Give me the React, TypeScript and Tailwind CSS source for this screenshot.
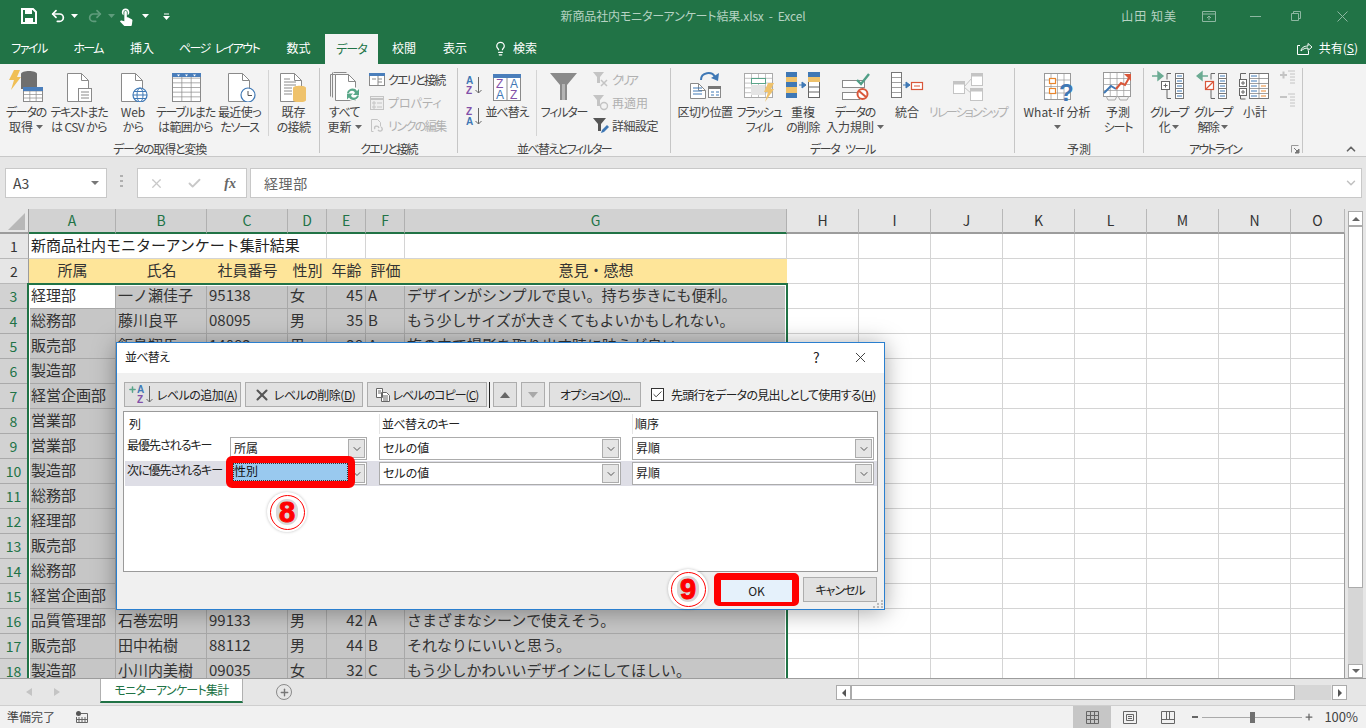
import { Check, ChevronDown, ChevronUp, Lightbulb, Plus, Redo2, Undo2, X } from "lucide-react";
import type { ReactNode } from "react";
import { MdTouchApp } from "react-icons/md";

const BLUE = "#3f78b5";
const ORANGE = "#efc26b";
const LINE = "#8a8a8a";
const DIM = "#c4c4c4";

// sheet data, rows hidden by the dialog only have the first column showing
const rows: string[][] = [
  ["3", "経理部", "一ノ瀬佳子", "95138", "女", "45", "A", "デザインがシンプルで良い。持ち歩きにも便利。"],
  ["4", "総務部", "藤川良平", "08095", "男", "35", "B", "もう少しサイズが大きくてもよいかもしれない。"],
  ["5", "販売部", "飯島翔馬", "14083", "男", "38", "A", "旅の中で撮影を取り出す時に映えが良い。"],
  ["6", "製造部"],
  ["7", "経営企画部"],
  ["8", "営業部"],
  ["9", "営業部"],
  ["10", "製造部"],
  ["11", "総務部"],
  ["12", "経理部"],
  ["13", "販売部"],
  ["14", "総務部"],
  ["15", "経営企画部"],
  ["16", "品質管理部", "石巻宏明", "99133", "男", "42", "A", "さまざまなシーンで使えそう。"],
  ["17", "販売部", "田中祐樹", "88112", "男", "44", "B", "それなりにいいと思う。"],
  ["18", "製造部", "小川内美樹", "09035", "女", "32", "C", "もう少しかわいいデザインにしてほしい。"],
];

const colWidths = ["w-[87px]", "w-[91px]", "w-[81px]", "w-[39px]", "w-[39px]", "w-[39px]", "w-[382px]"];
const restWidths = ["w-[72px]", "w-[72px]", "w-[72px]", "w-[72px]", "w-[72px]", "w-[72px]", "w-[72px]", "w-[54px]"];
const colNames = ["A", "B", "C", "D", "E", "F", "G"];
const restNames = ["H", "I", "J", "K", "L", "M", "N", "O"];

// the kana of the UI font in the picture is narrower than Noto's, even with palt
const kanaTrack = (line: string) => {
  if (/[ァ-ヿ]/.test(line)) return "tracking-[-1.2px]";
  if (/[ぁ-ゖ]/.test(line)) return "tracking-[-0.6px]";
  return "";
};

const Caret = ({ color = "#666" }: { color?: string }) => (
  <svg width="7" height="4" viewBox="0 0 7 4" className="inline-block">
    <path d="M0 0h7L3.5 4z" fill={color} />
  </svg>
);

const Icon = ({ children, size = 32 }: { children: ReactNode; size?: number }) => (
  <svg width={size} height={size} viewBox={`0 0 ${size} ${size}`} className="shrink-0">
    {children}
  </svg>
);

const Doc = ({ x = 1, y = 3, w = 21, h = 28 }: { x?: number; y?: number; w?: number; h?: number }) => (
  <>
    <path d={`M${x + 0.5} ${y + 0.5}h${w - 7}l7 7v${h - 7}h-${w}z`} fill="#fff" stroke={LINE} />
    <path d={`M${x + w - 6.5} ${y + 0.5}v7h7`} fill="none" stroke={LINE} />
  </>
);

const Grid3 = ({ x, y, w, h, cols, rowsN, color = "#8a8a8a", head }: { x: number; y: number; w: number; h: number; cols: number; rowsN: number; color?: string; head?: string }) => {
  const cw = w / cols;
  const rh = h / rowsN;
  return (
    <>
      <rect x={x + 0.5} y={y + 0.5} width={w} height={h} fill="#fff" stroke={color} />
      {Array.from({ length: cols - 1 }).map((_, i) => (
        <path key={i} d={`M${x + 0.5 + cw * (i + 1)} ${y}v${h}`} stroke={color} strokeOpacity="0.7" />
      ))}
      {Array.from({ length: rowsN - 1 }).map((_, i) => (
        <path key={i} d={`M${x} ${y + 0.5 + rh * (i + 1)}h${w}`} stroke={color} strokeOpacity="0.7" />
      ))}
      {head && <rect x={x} y={y} width={w + 1} height={4} fill={head} />}
    </>
  );
};

const IconDataGet = () => (
  <Icon size={34}>
    <path d="M5 1h6L8 8h4L2 21l3-10H0z" fill="#f0bf55" />
    <path d="M12 5c0-4 16-4 16 0v15H12z" fill="#6f6f6f" />
    <Grid3 x={14} y={18} w={19} h={14} cols={3} rowsN={4} head="#4a7ebb" />
  </Icon>
);
const IconText = () => (
  <Icon>
    <Doc x={4} />
    <rect x="15.5" y="18.5" width="13" height="13" fill="#fff" stroke={LINE} />
    <path d="M18 22h8M18 25h8M18 28h8" stroke={LINE} />
  </Icon>
);
const IconWeb = () => (
  <Icon>
    <Doc x={4} />
    <circle cx="23" cy="25" r="7" fill="#fff" stroke={BLUE} strokeWidth="1.2" />
    <ellipse cx="23" cy="25" rx="3" ry="7" fill="none" stroke={BLUE} />
    <path d="M16 25h14M17 21.5h12M17 28.5h12" stroke={BLUE} />
  </Icon>
);
const IconTable = () => (
  <Icon>
    <Grid3 x={2} y={3} w={28} h={28} cols={3} rowsN={6} head="#4a7ebb" />
    <path d="M7 4.5h3l-1.5 2zM15 4.5h3l-1.5 2zM23 4.5h3l-1.5 2z" fill="#fff" />
  </Icon>
);
const IconRecent = () => (
  <Icon>
    <Doc x={4} />
    <circle cx="24" cy="25" r="7" fill="#fff" stroke={BLUE} strokeWidth="1.2" />
    <path d="M24 21v4.5h4" fill="none" stroke="#555" />
  </Icon>
);
const IconExisting = () => (
  <Icon>
    <Doc x={2} />
    <path d="M6 9h6M6 12h12M6 15h12M6 18h8M6 21h8M6 24h8" stroke={LINE} />
    <path d="M15 18c0-3 13-3 13 0v12c0 3-13 3-13 0z" fill={ORANGE} />
  </Icon>
);
const IconRefresh = () => (
  <Icon>
    <path d="M1.5 4.5h13M1.5 4.5v22M4.5 2.5h13M3.5 2.5v25" fill="none" stroke={LINE} />
    <Doc x={6} y={4} w={20} h={26} />
    <circle cx="24" cy="24" r="7" fill="#fff" />
    <path d="M18 23c1-5 8-6 10-2l2-2v6h-6l2-2c-1-3-5-3-6 0zM30 25.5c-1 5-8 6-10 2l-2 2v-6h6l-2 2c1 3 5 3 6 0z" fill="#58a888" />
  </Icon>
);
const IconQuery = () => (
  <Icon size={16}>
    <rect x="0.5" y="1.5" width="15" height="12" fill="#fff" stroke={LINE} />
    <rect x="0" y="1" width="16" height="3" fill="#4a7ebb" />
    <path d="M3 7h4M9 7h4M9 10h4M9 4v10" stroke={LINE} />
  </Icon>
);
const IconProps = () => (
  <Icon size={16}>
    <rect x="1.5" y="1.5" width="13" height="13" fill="#eee" stroke={DIM} />
    <path d="M1 4h14" stroke={DIM} strokeWidth="2" />
    <path d="M4 7h2v2H4zM4 11h2v2H4zM8 8h5M8 12h5" stroke={DIM} fill="none" />
  </Icon>
);
const IconLink = () => (
  <Icon size={16}>
    <path d="M2.5 1.5h6l3 3v4M2.5 1.5v12h2" fill="none" stroke={DIM} />
    <path d="M6 11c-2-3 3-4 4-1M9 12c3 3 6-1 3-3" fill="none" stroke={DIM} strokeWidth="1.4" />
  </Icon>
);
const SortAZ = ({ first, second }: { first: string; second: string }) => (
  <svg width="17" height="19" viewBox="0 0 17 19" className="shrink-0">
    <text x="0" y="8" fontSize="10" fontWeight="bold" fontFamily="Liberation Sans" fill={first === "A" ? BLUE : "#8250a8"}>
      {first}
    </text>
    <text x="0" y="18" fontSize="10" fontWeight="bold" fontFamily="Liberation Sans" fill={second === "A" ? BLUE : "#8250a8"}>
      {second}
    </text>
    <path d="M12.5 1v16M9.5 14l3 3 3-3" fill="none" stroke="#666" />
  </svg>
);
const IconSort = () => (
  <Icon>
    <rect x="2.5" y="6.5" width="27" height="24" fill="#fff" stroke={LINE} />
    <rect x="2" y="4" width="28" height="4" fill="#4a7ebb" />
    <path d="M16 8v23" stroke={LINE} />
    <text x="5" y="18" fontSize="12" fontFamily="Liberation Sans" fill="#8250a8">Z</text>
    <text x="5" y="29" fontSize="12" fontFamily="Liberation Sans" fill={BLUE}>A</text>
    <text x="19" y="18" fontSize="12" fontFamily="Liberation Sans" fill={BLUE}>A</text>
    <text x="19" y="29" fontSize="12" fontFamily="Liberation Sans" fill="#8250a8">Z</text>
  </Icon>
);
const IconFunnel = () => (
  <Icon>
    <path d="M2 3h27L19 15v15h-7V15z" fill="#8a8a8a" />
    <path d="M14 14h3v16h-3z" fill="#b4b4b4" />
  </Icon>
);
const IconClear = () => (
  <Icon size={18}>
    <path d="M1 1h11L8 6v6H5V6z" fill={DIM} />
    <path d="M9 9l6 6M15 9l-6 6" stroke={DIM} strokeWidth="1.5" />
  </Icon>
);
const IconReapply = () => (
  <Icon size={18}>
    <path d="M1 1h11L8 6v6H5V6z" fill={DIM} />
    <circle cx="12" cy="12" r="3.5" fill="none" stroke={DIM} strokeWidth="1.4" />
  </Icon>
);
const IconAdvanced = () => (
  <Icon size={18}>
    <path d="M1 1h13L9 7v7H6V7z" fill="#555" />
    <path d="M9 16l1-3 5-5 2 2-5 5z" fill={BLUE} />
  </Icon>
);
const IconSplit = () => (
  <Icon>
    <Doc x={1} y={13} w={15} h={15} />
    <path d="M4 18h9M4 21h9M4 24h9" stroke={BLUE} />
    <rect x="19.5" y="16.5" width="12" height="11" fill="#fff" stroke={LINE} />
    <rect x="19" y="16" width="13" height="3" fill="#777" />
    <path d="M22 22h3M27 22h3M22 25h3M27 25h3" stroke={BLUE} />
    <path d="M12 10c0-8 11-9 14-3" fill="none" stroke={BLUE} strokeWidth="2" />
    <path d="M22 8l7 3 1-8z" fill={BLUE} />
  </Icon>
);
const IconFlash = () => (
  <Icon size={34}>
    <Grid3 x={2} y={4} w={28} h={24} cols={4} rowsN={5} color="#aaa" />
    <rect x="9.5" y="9.5" width="14" height="5" fill="#fff" stroke="#5aa58a" />
    <rect x="9" y="16" width="14" height="10" fill="#e4e4e4" />
    <path d="M26 14h6l-3 6h3L23 33l3-10h-4z" fill={ORANGE} />
  </Icon>
);
const IconDuplicates = () => (
  <Icon size={34}>
    <rect x="0" y="3" width="11" height="26" fill={BLUE} />
    <rect x="0" y="8" width="11" height="5" fill={ORANGE} />
    <rect x="0" y="18" width="11" height="6" fill={ORANGE} />
    <rect x="22.5" y="3.5" width="11" height="25" fill="#fff" stroke="#666" />
    <rect x="22" y="3" width="12" height="5" fill={BLUE} />
    <rect x="22" y="8" width="12" height="5" fill={ORANGE} />
    <path d="M23 18h11M23 23h11" stroke="#666" />
    <path d="M13 16h5M16 13l4 3-4 3z" fill={BLUE} stroke={BLUE} />
  </Icon>
);
const IconValidation = () => (
  <Icon>
    <rect x="3.5" y="10.5" width="22" height="7" fill="#fff" stroke={LINE} />
    <rect x="3.5" y="22.5" width="17" height="7" fill="#fff" stroke={LINE} />
    <path d="M18 10l4 4 8-10" fill="none" stroke="#4f9e86" strokeWidth="2.4" />
    <circle cx="23.5" cy="24" r="5" fill="#fff" stroke="#d9573a" strokeWidth="2" />
    <path d="M20 21l7 6" stroke="#d9573a" strokeWidth="2" />
  </Icon>
);
const IconConsolidate = () => (
  <Icon size={34}>
    <Grid3 x={1} y={3} w={10} h={25} cols={1} rowsN={5} color="#777" />
    <path d="M13 16h5M16 13l4 3-4 3z" fill={BLUE} stroke={BLUE} />
    <rect x="21.5" y="13.5" width="11" height="7" fill="#fff" stroke="#d9573a" strokeWidth="1.2" />
    <path d="M24 17h6" stroke="#d9573a" />
  </Icon>
);
const IconRelation = () => (
  <Icon size={34}>
    <path d="M13 18l8-9M13 18l8 7" stroke={DIM} fill="none" />
    <g fill="#fff" stroke={DIM}>
      <rect x="2.5" y="12.5" width="11" height="12" />
      <rect x="20.5" y="4.5" width="11" height="12" />
      <rect x="19.5" y="19.5" width="12" height="12" />
    </g>
    <path d="M2 14h12M20 6h12M19 21h13" stroke={DIM} strokeWidth="3" />
  </Icon>
);
const IconWhatIf = () => (
  <Icon size={34}>
    <Grid3 x={4} y={4} w={26} h={26} cols={4} rowsN={4} color="#999" />
    <rect x="9.5" y="9.5" width="6" height="5" fill="#fff" stroke="#e8862e" strokeWidth="1.2" />
    <rect x="9.5" y="19.5" width="6" height="5" fill="#fff" stroke="#e8862e" strokeWidth="1.2" />
    <text x="19" y="32" fontSize="24" fontWeight="bold" fontFamily="Liberation Sans" fill={BLUE}>?</text>
  </Icon>
);
const IconForecast = () => (
  <Icon size={34}>
    <Grid3 x={2} y={3} w={27} h={24} cols={4} rowsN={4} color="#999" />
    <path d="M3 24l7-7 5 3" fill="none" stroke={BLUE} strokeWidth="2" />
    <path d="M15 20l5-6 4 2 4-7" fill="none" stroke="#d9573a" strokeWidth="2" />
    <path d="M23 5h7v7z" fill="#d9573a" />
    <path d="M5 27l2 4h7l2-4M17 27l2 4h7l2-4" fill="none" stroke="#aaa" />
  </Icon>
);
const DashCol = ({ x, y = 4 }: { x: number; y?: number }) => (
  <>
    <rect x={x + 0.5} y={y + 0.5} width="8" height="25" fill="#fff" stroke="#777" />
    <path d={`M${x} ${y + 5.5}h8M${x} ${y + 10.5}h8M${x} ${y + 15.5}h8M${x} ${y + 20.5}h8`} stroke="#777" />
    <path d={`M${x + 2} ${y + 3}h5M${x + 2} ${y + 8}h5M${x + 2} ${y + 13}h5M${x + 2} ${y + 18}h5M${x + 2} ${y + 23}h5`} stroke={BLUE} />
  </>
);
const IconGroup = () => (
  <Icon size={34}>
    <path d="M0 7h8M6 3l5 4-5 4z" fill="#6bab93" stroke="#6bab93" strokeWidth="1.4" />
    <path d="M19 4.5h-4v6M15 21v8.5h4" fill="none" stroke="#666" />
    <rect x="9.5" y="12.5" width="8" height="8" fill="#fff" stroke="#666" />
    <path d="M11.5 16.5h4M13.5 14.5v4" stroke="#666" />
    <DashCol x={23} />
  </Icon>
);
const IconUngroup = () => (
  <Icon size={34}>
    <path d="M12 7H4M6 3L1 7l5 4z" fill="#6bab93" stroke="#6bab93" strokeWidth="1.4" />
    <path d="M19 4.5h-4v6M15 21v8.5h4" fill="none" stroke="#666" />
    <rect x="9.5" y="12.5" width="8" height="8" fill="#fff" stroke="#d9573a" strokeWidth="1.2" />
    <path d="M10 20l7-7" stroke="#d9573a" strokeWidth="1.2" />
    <DashCol x={22} />
  </Icon>
);
const IconSubtotal = () => (
  <Icon size={34}>
    <path d="M8 4.5H2.5v6M2.5 22v8h5" fill="none" stroke="#666" />
    <rect x="1.5" y="10.5" width="7" height="7" fill="#fff" stroke="#666" />
    <rect x="1.5" y="19.5" width="7" height="7" fill="#fff" stroke="#666" />
    <path d="M3 14h4M5 12v4M3 23h4M5 21v4" stroke="#666" />
    <Grid3 x={11} y={4} w={19} h={25} cols={2} rowsN={5} color="#777" />
    <path d="M13 7h6M13 12h6M13 17h6M13 22h6M13 27h6" stroke={BLUE} />
    <path d="M23 17h5M23 22h5M23 27h5M13 17h0" stroke="#e8862e" />
  </Icon>
);
const IconDetail = ({ minus }: { minus?: boolean }) => (
  <Icon size={16}>
    <path d={minus ? "M0 4h7" : "M0 5h7M3.5 1.5v7"} stroke={DIM} strokeWidth="2" />
    <path d="M8 1h7M10 4h5M10 7h5M10 10h5M10 13h5" stroke={DIM} />
  </Icon>
);

const BigButton = ({ w, icon, lines, caret, disabled, track }: { w: string; icon: ReactNode; lines: string[]; caret?: boolean; disabled?: boolean; track?: string }) => (
  <div className={`${w} flex shrink-0 flex-col items-center pt-px ${disabled ? "text-[#b0b0b0]" : "text-[#444]"}`}>
    <div className="flex h-[34px] items-center">{icon}</div>
    <div className="mt-[1px] flex flex-col items-center whitespace-nowrap text-[12px] leading-[15px]">
      {lines.map((line, i) => (
        <span key={line} className={`${track ?? kanaTrack(line)} flex min-h-[15px] items-center gap-[3px]`}>
          {line}
          {caret && i === lines.length - 1 && <Caret />}
        </span>
      ))}
    </div>
  </div>
);

const SmallButton = ({ icon, label, disabled, track = "", gap = "gap-[3px]" }: { icon: ReactNode; label: string; disabled?: boolean; track?: string; gap?: string }) => (
  <div className={`${gap} flex h-[23px] items-center whitespace-nowrap text-[12px] ${disabled ? "text-[#b0b0b0]" : "text-[#444]"}`}>
    {icon}
    <span className={track}>{label}</span>
  </div>
);

const RibbonGroup = ({ w, label, children, track, labelClass = "" }: { w: string; label: string; children: ReactNode; track: string; labelClass?: string }) => (
  <div className={`${w} flex h-[85px] shrink-0 flex-col border-r border-[#c6c6c6]`}>
    <div className="flex h-[73px] items-start">{children}</div>
    <div className={`${track} ${labelClass} h-[12px] whitespace-nowrap text-center text-[12px] leading-[16px] text-[#444]`}>{label}</div>
  </div>
);

const RibbonDivider = ({ h = "h-[66px]" }: { h?: string }) => <div className={`${h} mt-[2px] w-px shrink-0 bg-[#d4d4d4]`} />;

const Ribbon = () => (
  <div className="relative flex h-[93px] items-start border-b border-[#c8c8c8] bg-[#f3f3f3] pt-[4px]">
    <RibbonGroup w="w-[320px]" label="データの取得と変換" track="tracking-[-1.2px]">
      <BigButton w="w-[52px]" icon={<IconDataGet />} lines={["データの", "取得"]} caret />
      <BigButton w="w-[54px]" icon={<IconText />} lines={["テキストまた", "は CSV から"]} />
      <BigButton w="w-[54px]" icon={<IconWeb />} lines={["Web", "から"]} />
      <BigButton w="w-[51px]" icon={<IconTable />} lines={["テーブルまた", "は範囲から"]} />
      <BigButton w="w-[57px]" icon={<IconRecent />} lines={["最近使っ", "たソース"]} />
      <RibbonDivider />
      <BigButton w="w-[49px]" icon={<IconExisting />} lines={["既存", "の接続"]} />
    </RibbonGroup>
    <RibbonGroup w="w-[138px]" label="クエリと接続" track="tracking-[-1.7px]">
      <BigButton w="w-[49px]" icon={<IconRefresh />} lines={["すべて", "更新"]} caret />
      <div className="flex flex-col">
        <SmallButton icon={<IconQuery />} label="クエリと接続" track="tracking-[-1.7px]" />
        <SmallButton icon={<IconProps />} label="プロパティ" disabled />
        <SmallButton icon={<IconLink />} label="リンクの編集" disabled track="tracking-[-1.5px]" />
      </div>
    </RibbonGroup>
    <RibbonGroup w="w-[213px]" label="並べ替えとフィルター" track="tracking-[-1.6px]">
      <div className="ml-[8px] flex w-[16px] shrink-0 flex-col gap-[12px] pt-[8px]">
        <SortAZ first="A" second="Z" />
        <SortAZ first="Z" second="A" />
      </div>
      <BigButton w="w-[50px]" icon={<IconSort />} lines={["並べ替え"]} track="tracking-[-1px]" />
      <div className="w-[4px] shrink-0" />
      <RibbonDivider />
      <BigButton w="w-[54px]" icon={<IconFunnel />} lines={["フィルター"]} />
      <div className="flex flex-col pl-[1px]">
        <SmallButton icon={<IconClear />} label="クリア" disabled track="tracking-[-2.5px]" gap="gap-[2px]" />
        <SmallButton icon={<IconReapply />} label="再適用" disabled gap="gap-[2px]" />
        <SmallButton icon={<IconAdvanced />} label="詳細設定" track="tracking-[-0.5px]" gap="gap-[2px]" />
      </div>
    </RibbonGroup>
    <RibbonGroup w="w-[344px]" label="データ ツール" track="tracking-[-1.3px] [word-spacing:4px]">
      <BigButton w="w-[68px]" icon={<IconSplit />} lines={["区切り位置"]} />
      <BigButton w="w-[40px]" icon={<IconFlash />} lines={["フラッシュ", "フィル"]} />
      <BigButton w="w-[48px]" icon={<IconDuplicates />} lines={["重複", "の削除"]} />
      <BigButton w="w-[56px]" icon={<IconValidation />} lines={["データの", "入力規則"]} caret />
      <BigButton w="w-[48px]" icon={<IconConsolidate />} lines={["統合"]} />
      <BigButton w="w-[74px]" icon={<IconRelation />} lines={["リレーションシップ"]} disabled track="tracking-[-1.8px]" />
    </RibbonGroup>
    <RibbonGroup w="w-[129px]" label="予測" track="">
      <BigButton w="w-[84px]" icon={<IconWhatIf />} lines={["What-If 分析", ""]} caret track="" />
      <BigButton w="w-[38px]" icon={<IconForecast />} lines={["予測", "シート"]} />
    </RibbonGroup>
    <RibbonGroup w="w-[159px]" label="アウトライン" track="tracking-[-1.8px]" labelClass="pr-[16px]">
      <BigButton w="w-[50px]" icon={<IconGroup />} lines={["グループ", "化"]} caret track="tracking-[-1.6px]" />
      <BigButton w="w-[38px]" icon={<IconUngroup />} lines={["グループ", "解除"]} caret track="tracking-[-1.6px]" />
      <BigButton w="w-[46px]" icon={<IconSubtotal />} lines={["小計"]} />
      <div className="ml-[2px] flex flex-col gap-[7px] pt-[2px]">
        <IconDetail />
        <IconDetail minus />
      </div>
    </RibbonGroup>
    <svg width="9" height="9" viewBox="0 0 9 9" className="absolute left-[1291px] top-[81px]">
      <path d="M0.5 0.5h7M0.5 0.5v7" fill="none" stroke="#999" />
      <path d="M3 3l5 5M8 4v4H4z" fill="#777" stroke="#777" />
    </svg>
    <ChevronUp size={14} strokeWidth={3} className="absolute left-[1344px] top-[78px] text-[#666]" />
  </div>
);

const TitleBar = () => (
  <div className="relative flex h-[32px] items-center bg-[#217346]">
    <div className="ml-[21px] flex items-center text-white">
      <svg width="16" height="16" viewBox="0 0 16 16">
        <path d="M1 1h11l3 3v11H1z" fill="none" stroke="#fff" strokeWidth="2" />
        <rect x="4" y="1" width="7" height="5" fill="#fff" />
        <rect x="4" y="10" width="8" height="5" fill="#fff" />
      </svg>
      <Undo2 size={16} strokeWidth={2.6} className="ml-[13px]" />
      <span className="ml-[5px] flex"><Caret color="#fff" /></span>
      <Redo2 size={16} strokeWidth={2.6} className="ml-[9px] text-[#5f9c7c]" />
      <span className="ml-[5px] flex"><Caret color="#5f9c7c" /></span>
      <MdTouchApp size={20} className="ml-[1px]" />
      <span className="ml-[6px] flex"><Caret color="#fff" /></span>
      <svg width="7" height="7" viewBox="0 0 7 7" className="ml-[14px]">
        <path d="M1 1h5" stroke="#fff" />
        <path d="M0 3h7L3.5 7z" fill="#fff" />
      </svg>
    </div>
    {/* title sits in the middle of the window, not in the flow of the icons */}
    <div className="absolute inset-x-0 top-[7px] text-center text-[12px] leading-[18px] tracking-[-0.15px] text-[#b5d2c2]">新商品社内モニターアンケート結果.xlsx&nbsp; -&nbsp; Excel</div>
    <div className="ml-auto flex items-center text-[12px] text-[#b5d2c2]">
      <span className="tracking-[1px]">山田 知美</span>
      <svg width="14" height="11" viewBox="0 0 14 11" className="ml-[25px]">
        <path d="M0.5 0.5h13v10h-13zM0.5 3h13M7 9V5M5 7l2-2 2 2" fill="none" stroke="#8db7a1" />
      </svg>
      <svg width="11" height="1" viewBox="0 0 11 1" className="ml-[34px]">
        <path d="M0 0.5h11" stroke="#8db7a1" />
      </svg>
      <svg width="10" height="10" viewBox="0 0 10 10" className="ml-[30px]">
        <path d="M0.5 2.5h7v7h-7zM2.5 2.5v-2h7v7h-2" fill="none" stroke="#8db7a1" />
      </svg>
      <svg width="11" height="11" viewBox="0 0 11 11" className="ml-[36px] mr-[18px]">
        <path d="M0.5 0.5l10 10M10.5 0.5l-10 10" stroke="#8db7a1" />
      </svg>
    </div>
  </div>
);

const tabs = [
  { label: "ファイル", w: "w-[58px]", track: "tracking-[-1.5px]" },
  { label: "ホーム", w: "w-[60px]", track: "tracking-[-1.7px]" },
  { label: "挿入", w: "w-[48px]", track: "" },
  { label: "ページ レイアウト", w: "w-[106px]", track: "tracking-[-1.6px] [word-spacing:4px]" },
  { label: "数式", w: "w-[53px]", track: "" },
];
const tabsAfter = [
  { label: "校閲", w: "w-[52px]" },
  { label: "表示", w: "w-[50px]" },
];

const TabStrip = () => (
  <div className="flex h-[32px] items-end bg-[#217346] text-[12px] text-white">
    {tabs.map((t) => (
      <div key={t.label} className={`${t.w} ${t.track} flex h-[32px] shrink-0 items-center justify-center whitespace-nowrap`}>
        {t.label}
      </div>
    ))}
    <div className="flex h-[30px] w-[53px] shrink-0 items-center justify-center bg-[#f3f3f3] tracking-[-1px] text-[#217346]">データ</div>
    {tabsAfter.map((t) => (
      <div key={t.label} className={`${t.w} flex h-[32px] shrink-0 items-center justify-center whitespace-nowrap`}>
        {t.label}
      </div>
    ))}
    <div className="ml-[13px] flex h-[32px] items-center gap-[5px]">
      <Lightbulb size={15} />
      検索
    </div>
    <div className="ml-auto mr-[8px] flex h-[32px] items-center gap-[6px]">
      <svg width="16" height="14" viewBox="0 0 16 14">
        <path d="M3 4.5H0.5v9h11V10M4 10c0-3 3-5 7-5V2.5l4 3.5L11 9.5V7c-3 0-5 1-7 3z" fill="none" stroke="#fff" />
      </svg>
      <span>
        共有(<span className="underline">S</span>)
      </span>
    </div>
  </div>
);

const FormulaBar = () => (
  <div className="flex h-[52px] items-start bg-[#e6e6e6] pt-[11px]">
    <div className="ml-[5px] flex h-[30px] w-[102px] items-center border border-[#c8c8c8] bg-white pl-[7px] pr-[7px] text-[14px] text-[#444]">
      A3
      <svg width="8" height="4" viewBox="0 0 8 4" className="ml-auto">
        <path d="M0 0h8L4 4z" fill="#777" />
      </svg>
    </div>
    <div className="ml-[13px] mt-[7px] flex h-[12px] w-[3px] flex-col justify-between">
      <i className="h-[2px] bg-[#b0b0b0]" />
      <i className="h-[2px] bg-[#b0b0b0]" />
      <i className="h-[2px] bg-[#b0b0b0]" />
    </div>
    <div className="ml-[14px] flex h-[30px] w-[110px] items-center justify-between border border-[#c8c8c8] bg-white pl-[11px] pr-[10px]">
      <X size={15} strokeWidth={2} className="text-[#c8c8c8]" />
      <Check size={15} strokeWidth={3} className="text-[#c8c8c8]" />
      <span className="font-['Liberation_Serif',serif] text-[14px] font-bold italic text-[#666]">fx</span>
    </div>
    <div className="ml-[3px] flex h-[30px] w-[1112px] items-center justify-between border border-[#c8c8c8] bg-white pl-[13px] pr-[3px] text-[14px] tracking-[0.6px] text-[#666]">
      経理部
      <ChevronDown size={14} strokeWidth={2.5} className="text-[#c0c0c0]" />
    </div>
  </div>
);

const HeaderCell = ({ w, name, active }: { w: string; name: string; active?: boolean }) => (
  <div
    className={`${w} flex h-[25px] shrink-0 items-center justify-center border-r text-[14px] ${
      active ? "border-[#b0b0b0] bg-[#d2d2d2] text-[#217346]" : "border-[#b8b8b8] bg-[#e6e6e6] text-[#333]"
    } border-b-2 ${active ? "border-b-[#217346]" : "border-b-[#9c9c9c]"}`}
  >
    {name}
  </div>
);

const RowHead = ({ n, active }: { n: string; active?: boolean }) => (
  <div
    className={`flex h-[25px] w-[29px] shrink-0 items-center justify-center border-b text-[14px] ${
      active ? "border-r-2 border-r-[#217346] border-b-[#aaa] bg-[#d2d2d2] text-[#217346]" : "border-r border-r-[#9c9c9c] border-b-[#b8b8b8] bg-[#e6e6e6] text-[#333]"
    }`}
  >
    {n}
  </div>
);

const EmptyCells = () => (
  <>
    {restWidths.map((w, i) => (
      <div key={i} className={`${w} h-[25px] shrink-0 border-b border-r border-[#d4d4d4] bg-white`} />
    ))}
  </>
);

const Sheet = () => (
  <div className="flex h-[469px] bg-[#e6e6e6] [font-feature-settings:normal]">
    <div className="relative w-[1345px] shrink-0 overflow-hidden">
      <div className="flex">
        <div className="flex h-[25px] w-[29px] shrink-0 items-end justify-end border-b-2 border-r border-[#9c9c9c] pb-[2px] pr-[3px]">
          <svg width="17" height="17" viewBox="0 0 17 17">
            <path d="M17 0v17H0z" fill="#b8b8b8" />
          </svg>
        </div>
        {colNames.map((n, i) => (
          <HeaderCell key={n} w={colWidths[i]} name={n} active />
        ))}
        {restNames.map((n, i) => (
          <HeaderCell key={n} w={restWidths[i]} name={n} />
        ))}
      </div>

      {/* row 1 */}
      <div className="flex">
        <RowHead n="1" />
        <div className="flex h-[25px] w-[298px] shrink-0 items-center whitespace-nowrap border-b border-r border-[#d4d4d4] bg-white pb-[2px] pl-[2px] text-[15px] text-[#222]">
          新商品社内モニターアンケート集計結果
        </div>
        <div className="h-[25px] w-[39px] shrink-0 border-b border-r border-[#d4d4d4] bg-white" />
        <div className="h-[25px] w-[39px] shrink-0 border-b border-r border-[#d4d4d4] bg-white" />
        <div className="h-[25px] w-[382px] shrink-0 border-b border-r border-[#d4d4d4] bg-white" />
        <EmptyCells />
      </div>

      {/* row 2 */}
      <div className="flex">
        <RowHead n="2" />
        {["所属", "氏名", "社員番号", "性別", "年齢", "評価", "意見・感想"].map((t, i) => (
          <div key={t} className={`${colWidths[i]} flex h-[25px] shrink-0 items-center justify-center whitespace-nowrap border-b border-[#e5d08c] bg-[#fee599] pb-[2px] text-[15px] text-[#333]`}>
            {t}
          </div>
        ))}
        <EmptyCells />
      </div>

      {rows.map((r) => (
        <div key={r[0]} className="flex">
          <RowHead n={r[0]} active />
          {colNames.map((_, i) => {
            const text = r[i + 1] ?? "";
            const isActive = i === 0 && r[0] === "3";
            const align = i === 4 ? "justify-end pr-[2px]" : "pl-[2px]";
            return (
              <div
                key={i}
                className={`${colWidths[i]} ${align} flex h-[25px] shrink-0 items-center whitespace-nowrap border-b border-r border-[#a8a8a8] pb-[2px] text-[15px] text-[#333] ${
                  isActive ? "bg-white" : "bg-[#c6c6c6]"
                }`}
              >
                {text}
              </div>
            );
          })}
          <EmptyCells />
        </div>
      ))}

      {/* selection outline */}
      <div className="pointer-events-none absolute left-[27px] top-[74px] h-[420px] w-[761px] border-2 border-[#217346] shadow-[inset_0_0_0_1px_#fff]" />
      <div className="pointer-events-none absolute bottom-0 right-0 top-[25px] w-px bg-[#9c9c9c]" />
    </div>

    <div className="flex w-[21px] flex-col pl-[3px] pr-[3px] pt-[2px]">
      <div className="flex h-[15px] shrink-0 items-center justify-center border border-[#ababab] bg-white">
        <svg width="8" height="4" viewBox="0 0 8 4">
          <path d="M0 4h8L4 0z" fill="#666" />
        </svg>
      </div>
      <div className="h-[362px] shrink-0 border border-[#ababab] bg-white" />
      <div className="flex-1 bg-[#d6d6d6]" />
      <div className="flex h-[14px] shrink-0 items-center justify-center border border-[#ababab] bg-white">
        <svg width="8" height="4" viewBox="0 0 8 4">
          <path d="M0 0h8L4 4z" fill="#666" />
        </svg>
      </div>
    </div>
  </div>
);

const SheetTabs = () => (
  <div className="flex h-[28px] items-start border-b border-t border-b-[#cfcfcf] border-t-[#9c9c9c] bg-[#e6e6e6]">
    <svg width="6" height="8" viewBox="0 0 6 8" className="ml-[26px] mt-[9px]">
      <path d="M6 0v8L0 4z" fill="#c4c4c4" />
    </svg>
    <svg width="6" height="8" viewBox="0 0 6 8" className="ml-[22px] mt-[9px]">
      <path d="M0 0v8l6-4z" fill="#c4c4c4" />
    </svg>
    <div className="ml-[40px] flex h-[24px] w-[143px] items-center justify-center border-x border-b-2 border-x-[#b0b0b0] border-b-[#217346] bg-white text-[12px] tracking-[-0.7px] text-[#217346]">
      モニターアンケート集計
    </div>
    <div className="ml-[33px] mt-[5px] flex h-[16px] w-[16px] items-center justify-center rounded-full border border-[#8a8a8a] text-[#777]">
      <Plus size={11} strokeWidth={3} />
    </div>
    <div className="ml-[544px] mt-[6px] flex h-[15px] w-[15px] items-center justify-center border border-[#ababab] bg-white">
      <svg width="4" height="8" viewBox="0 0 4 8">
        <path d="M4 0v8L0 4z" fill="#555" />
      </svg>
    </div>
    <div className="mt-[6px] h-[15px] w-[444px] border border-[#ababab] bg-white" />
    <div className="mt-[6px] h-[15px] w-[36px] bg-[#d6d6d6]" />
    <div className="ml-px mt-[6px] flex h-[15px] w-[15px] items-center justify-center border border-[#ababab] bg-white">
      <svg width="4" height="8" viewBox="0 0 4 8">
        <path d="M0 0v8l4-4z" fill="#555" />
      </svg>
    </div>
  </div>
);

const StatusBar = () => (
  <div className="flex h-[22px] items-center bg-[#f1f1f1] text-[12px] text-[#444]">
    <span className="ml-[7px]">準備完了</span>
    <svg width="12" height="12" viewBox="0 0 12 12" className="ml-[21px]">
      <circle cx="2.5" cy="2.5" r="2.5" fill="#555" />
      <path d="M5 2.5h6.5v9H0.5V6M3 6v5M6 6v5M9 6v5M1 8.5h10" fill="none" stroke="#666" />
    </svg>
    <div className="ml-auto flex h-[22px] w-[38px] items-center justify-center bg-[#c6c6c6]">
      <svg width="13" height="13" viewBox="0 0 13 13">
        <path d="M0.5 0.5h12v12H0.5zM4.5 0v13M8.5 0v13M0 4.5h13M0 8.5h13" fill="none" stroke="#666" />
      </svg>
    </div>
    <svg width="14" height="13" viewBox="0 0 14 13" className="ml-[12px]">
      <path d="M0.5 0.5h13v12H0.5zM3.5 3.5h7v6h-7zM5 5.5h4M5 7.5h4" fill="none" stroke="#666" />
    </svg>
    <svg width="14" height="13" viewBox="0 0 14 13" className="ml-[24px]">
      <path d="M0.5 0.5h13v12H0.5zM0 8.5h14M5.5 0v8M8.5 0v8" fill="none" stroke="#666" />
    </svg>
    <span className="ml-[17px] h-[2px] w-[6px] bg-[#666]" />
    <div className="relative ml-[4px] h-px w-[100px] bg-[#aaa]">
      <span className="absolute left-[48px] top-[-5px] h-[11px] w-[5px] bg-[#707070]" />
    </div>
    <Plus size={10} strokeWidth={3} className="ml-[2px] text-[#666]" />
    <span className="ml-[10px] mr-[8px] text-[13px]">100%</span>
  </div>
);

const Combo = ({ w, text }: { w: string; text: string }) => (
  <div className={`${w} flex h-[23px] shrink-0 items-center border border-[#acacac] bg-white pl-[3px] pr-[1px] text-[12px] text-[#222]`}>
    <span className="mb-[2px]">{text}</span>
    <div className="ml-auto flex h-[19px] w-[17px] items-center justify-center border border-[#acacac] bg-[#e5e5e5]">
      <ChevronDown size={12} className="text-[#555]" />
    </div>
  </div>
);

const DlgButton = ({ w, children }: { w: string; children: ReactNode }) => (
  <div className={`${w} flex h-[25px] shrink-0 items-center justify-center gap-[3px] whitespace-nowrap border border-[#adadad] bg-[#e1e1e1] text-[12px] text-[#222]`}>{children}</div>
);

const CircleMark = ({ className, digit }: { className: string; digit: string }) => (
  <div className={`${className} absolute flex h-[40px] w-[40px] items-center justify-center rounded-full bg-white shadow-[0_0_3px_rgba(0,0,0,0.25)]`}>
    <div className="relative flex h-[35px] w-[35px] items-center justify-center rounded-full border border-[#ff0000]">
      <span className="absolute h-[26px] w-[22px] rounded-full bg-[#d8d8d8]" />
      <span className="relative font-['Liberation_Sans',sans-serif] text-[29px] font-bold leading-none text-[#ff0000] [-webkit-text-stroke:1px_#ff0000]">{digit}</span>
    </div>
  </div>
);

const SortRow = ({ label, first, className = "" }: { label: string; first: string; className?: string }) => (
  <div className={`${className} ml-px flex h-[25px] items-start pt-px`}>
    <span className="w-[105px] shrink-0 whitespace-nowrap pl-[2px] leading-[16px] tracking-[-1px]">{label}</span>
    <Combo w="w-[137px]" text={first} />
    <div className="w-[12px] shrink-0" />
    <Combo w="w-[242px]" text="セルの値" />
    <div className="w-[11px] shrink-0" />
    <Combo w="w-[242px]" text="昇順" />
  </div>
);

const SortDialog = () => (
  <div className="absolute left-[116px] top-[342px] flex h-[268px] w-[769px] flex-col border border-[#2a7fcf] bg-[#f0f0f0] shadow-[0_2px_22px_rgba(0,0,0,0.35)]">
    <div className="flex h-[30px] shrink-0 items-center bg-white pb-[2px] pl-[8px] text-[12px] tracking-[-0.7px] text-[#222]">
      並べ替え
      <span className="ml-auto text-[14px]">?</span>
      <X size={17} strokeWidth={1.2} className="ml-[33px] mr-[15px]" />
    </div>

    <div className="ml-[7px] mt-[9px] flex items-center">
      <DlgButton w="w-[117px]">
        <span className="flex">
          <Plus size={9} strokeWidth={4} className="text-[#5aa58a]" />
          <SortAZ first="A" second="Z" />
        </span>
        <span className="tracking-[-0.5px]">
          レベルの追加(<u>A</u>)
        </span>
      </DlgButton>
      <div className="w-[4px] shrink-0" />
      <DlgButton w="w-[118px]">
        <X size={18} strokeWidth={2.8} className="text-[#555]" />
        <span className="tracking-[-0.5px]">
          レベルの削除(<u>D</u>)
        </span>
      </DlgButton>
      <div className="w-[4px] shrink-0" />
      <DlgButton w="w-[120px]">
        <svg width="14" height="14" viewBox="0 0 14 14">
          <path d="M0.5 0.5h6v9h-6zM5.5 4.5h5l3 3v6h-8zM2 3h3M2 5h3M7 8h5M7 10h5M7 12h5" fill="#fff" stroke="#666" />
        </svg>
        <span className="tracking-[-1px]">
          レベルのコピー(<u>C</u>)
        </span>
      </DlgButton>
      <div className="ml-[2px] -my-px h-[26px] w-px shrink-0 bg-[#222]" />
      <div className="w-[3px] shrink-0" />
      <DlgButton w="w-[24px]">
        <svg width="10" height="6" viewBox="0 0 10 6">
          <path d="M0 6h10L5 0z" fill="#666" />
        </svg>
      </DlgButton>
      <div className="w-[4px] shrink-0" />
      <DlgButton w="w-[24px]">
        <svg width="10" height="6" viewBox="0 0 10 6">
          <path d="M0 0h10L5 6z" fill="#a8a8a8" />
        </svg>
      </DlgButton>
      <div className="w-[4px] shrink-0" />
      <DlgButton w="w-[92px]">
        <span className="tracking-[-0.9px]">
          オプション(<u>O</u>)...
        </span>
      </DlgButton>
      <div className="ml-[10px] flex h-[13px] w-[13px] shrink-0 items-center justify-center border border-[#333] bg-white">
        <Check size={11} strokeWidth={2} className="text-[#333]" />
      </div>
      <span className="ml-[7px] whitespace-nowrap text-[12px] tracking-[-0.75px] text-[#222]">
        先頭行をデータの見出しとして使用する(<u>H</u>)
      </span>
    </div>

    <div className="ml-[6px] mt-[4px] h-[161px] w-[755px] shrink-0 border border-[#9a9a9a] bg-white text-[12px] text-[#222]">
      <div className="flex h-[24px] items-center">
        <span className="w-[255px] pl-[5px] leading-[20px]">列</span>
        <span className="w-[253px] border-l border-[#e4e4e4] pl-[2px] leading-[20px] tracking-[-0.6px]">並べ替えのキー</span>
        <span className="border-l border-[#e4e4e4] pl-[2px] leading-[20px]">順序</span>
      </div>
      <SortRow label="最優先されるキー" first="所属" />
      <SortRow label="次に優先されるキー" first="" className="bg-[#dedee6]" />
    </div>

    <div className="ml-auto mr-[7px] mt-[5px] flex items-center">
      <DlgButton w="w-[74px]">
        <span className="tracking-[-1px]">キャンセル</span>
      </DlgButton>
    </div>

    {/* red marks drawn over the dialog */}
    <div className="absolute left-[109px] top-[113px] h-[32px] w-[129px] rounded-[6px] border-[7px] border-[#ff0000]">
      <div className="flex h-full items-center bg-[#99c9ef] pb-[2px] pl-[1px] text-[12px] text-[#111] outline-1 -outline-offset-1 outline-dotted outline-[#333]">性別</div>
    </div>
    <div className="absolute left-[597px] top-[230px] h-[33px] w-[85px] rounded-[5px] border-x-[7px] border-b-[4px] border-t-[7px] border-[#ff0000]">
      <div className="flex h-full items-center justify-center bg-[#e5f1fb] text-[12px] text-[#222]">OK</div>
    </div>
    <CircleMark className="left-[150px] top-[149px]" digit="8" />
    <CircleMark className="left-[551px] top-[226px]" digit="9" />
    <svg width="10" height="8" viewBox="0 0 10 8" className="absolute left-[756px] top-[257px]">
      <path d="M8 0h2v2H8zM4 3h2v2H4zM8 3h2v2H8zM0 6h2v2H0zM4 6h2v2H4zM8 6h2v2H8z" fill="#bbb" />
    </svg>
  </div>
);

const App = () => (
  <div className="relative flex h-[728px] w-[1366px] flex-col overflow-hidden bg-white font-['Noto_Sans_CJK_JP','Noto_Sans',sans-serif] [font-feature-settings:'palt']">
    <TitleBar />
    <TabStrip />
    <Ribbon />
    <FormulaBar />
    <Sheet />
    <SheetTabs />
    <StatusBar />
    <SortDialog />
  </div>
);

export default App;
